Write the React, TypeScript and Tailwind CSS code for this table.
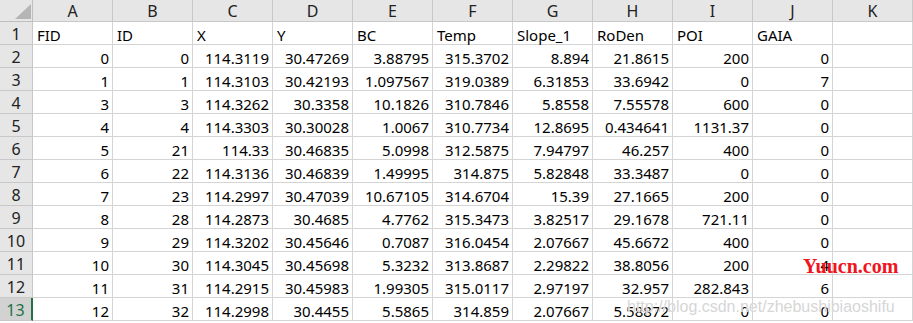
import React from "react";

const cols = ["A", "B", "C", "D", "E", "F", "G", "H", "I", "J", "K"];
const head = ["FID", "ID", "X", "Y", "BC", "Temp", "Slope_1", "RoDen", "POI", "GAIA", ""];
const data: string[][] = [
  ["0", "0", "114.3119", "30.47269", "3.88795", "315.3702", "8.894", "21.8615", "200", "0"],
  ["1", "1", "114.3103", "30.42193", "1.097567", "319.0389", "6.31853", "33.6942", "0", "7"],
  ["3", "3", "114.3262", "30.3358", "10.1826", "310.7846", "5.8558", "7.55578", "600", "0"],
  ["4", "4", "114.3303", "30.30028", "1.0067", "310.7734", "12.8695", "0.434641", "1131.37", "0"],
  ["5", "21", "114.33", "30.46835", "5.0998", "312.5875", "7.94797", "46.257", "400", "0"],
  ["6", "22", "114.3136", "30.46839", "1.49995", "314.875", "5.82848", "33.3487", "0", "0"],
  ["7", "23", "114.2997", "30.47039", "10.67105", "314.6704", "15.39", "27.1665", "200", "0"],
  ["8", "28", "114.2873", "30.4685", "4.7762", "315.3473", "3.82517", "29.1678", "721.11", "0"],
  ["9", "29", "114.3202", "30.45646", "0.7087", "316.0454", "2.07667", "45.6672", "400", "0"],
  ["10", "30", "114.3045", "30.45698", "5.3232", "313.8687", "2.29822", "38.8056", "200", "4"],
  ["11", "31", "114.2915", "30.45983", "1.99305", "315.0117", "2.97197", "32.957", "282.843", "6"],
  ["12", "32", "114.2998", "30.4455", "5.5865", "314.859", "2.07667", "5.58872", "0", "0"],
];

const font = { fontFamily: "'Noto Sans', 'Liberation Sans', sans-serif" };

export default function App() {
  return (
    <div className="relative w-[913px] h-[323px] overflow-hidden bg-white text-black" style={font}>
      <div className="grid grid-cols-[33px_repeat(11,80px)]">
        <div className="relative h-[22px] bg-[#e6e6e6] border-r border-b border-[#bfbfbf]">
          <svg className="absolute left-[15px] top-[4px]" width="16" height="15" viewBox="0 0 16 15">
            <polygon points="16,0 16,15 0,15" fill="#b5b5b5" />
          </svg>
        </div>
        {cols.map((c) => (
          <div
            key={c}
            className="h-[22px] bg-[#e6e6e6] border-r border-b border-[#c8c8c8] flex items-center justify-center text-[16px] leading-[18px] text-[#222]"
          >
            {c}
          </div>
        ))}
        <div className="h-[23px] bg-[#e6e6e6] border-r border-b border-[#c8c8c8] flex items-end justify-center text-[16px] leading-[19px] text-[#222]">
          1
        </div>
        {head.map((h, i) => (
          <div
            key={i}
            className="h-[23px] border-r border-b border-[#d4d4d4] flex items-end pl-[4px] text-[15px] leading-[18px] whitespace-nowrap"
          >
            {h}
          </div>
        ))}
        {data.map((row, r) => {
          const last = r === data.length - 1;
          return (
            <React.Fragment key={r}>
              <div
                className={
                  last
                    ? "h-[23px] bg-[#d2d2d2] border-r-2 border-r-[#217346] border-b border-b-[#c8c8c8] flex items-end justify-center text-[16px] leading-[19px] text-[#217346]"
                    : "h-[23px] bg-[#e6e6e6] border-r border-b border-[#c8c8c8] flex items-end justify-center text-[16px] leading-[19px] text-[#222]"
                }
              >
                {r + 2}
              </div>
              {row.concat([""]).map((v, i) => (
                <div
                  key={i}
                  className="h-[23px] border-r border-b border-[#d4d4d4] flex items-end justify-end pr-[3px] text-[15px] leading-[18px] whitespace-nowrap"
                >
                  {v}
                </div>
              ))}
            </React.Fragment>
          );
        })}
      </div>
      <div
        className="absolute left-[627px] top-[298px] text-[16px] leading-[18px] text-[#d6d6d6] whitespace-nowrap"
        style={{ fontFamily: "'Liberation Sans', sans-serif", textShadow: "0 0 1px #fff" }}
      >
        http://blog.csdn.net/zhebushibiaoshifu
      </div>
      <div
        className="absolute left-[803px] top-[255px] text-[20px] leading-[22px] font-bold text-[#f0141e] whitespace-nowrap"
        style={{ fontFamily: "'Liberation Serif', serif" }}
      >
        Yuucn.com
      </div>
    </div>
  );
}
